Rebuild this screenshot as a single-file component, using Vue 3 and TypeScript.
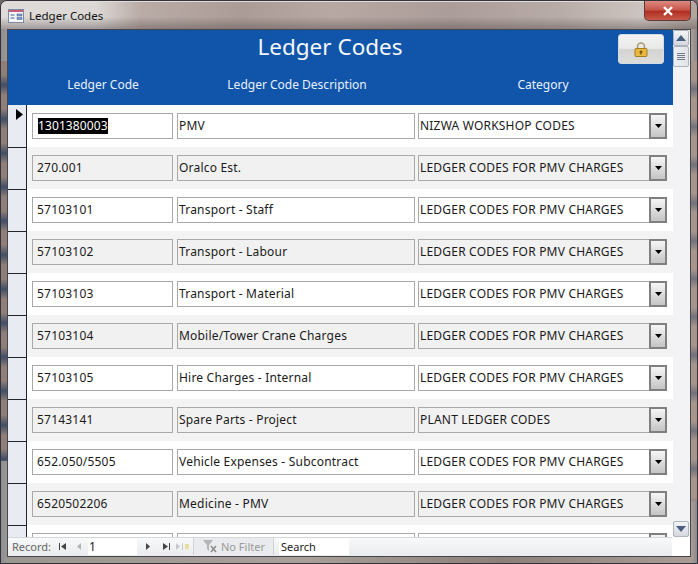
<script setup lang="ts">
interface Row { code: string; desc: string; cat: string }
const pmv = 'LEDGER CODES FOR PMV CHARGES'
const rows: Row[] = [
  { code: '1301380003', desc: 'PMV', cat: 'NIZWA WORKSHOP CODES' },
  { code: '270.001', desc: 'Oralco Est.', cat: pmv },
  { code: '57103101', desc: 'Transport - Staff', cat: pmv },
  { code: '57103102', desc: 'Transport - Labour', cat: pmv },
  { code: '57103103', desc: 'Transport - Material', cat: pmv },
  { code: '57103104', desc: 'Mobile/Tower Crane Charges', cat: pmv },
  { code: '57103105', desc: 'Hire Charges - Internal', cat: pmv },
  { code: '57143141', desc: 'Spare Parts - Project', cat: 'PLANT LEDGER CODES' },
  { code: '652.050/5505', desc: 'Vehicle Expenses - Subcontract', cat: pmv },
  { code: '6520502206', desc: 'Medicine - PMV', cat: pmv },
  { code: '', desc: '', cat: '' }
]
</script>

<template>
  <div class="window">
    <div class="titlebar">
      <svg class="appicon" width="16" height="14" viewBox="0 0 16 14">
        <rect x="0.5" y="0.5" width="15" height="13" fill="#f4f6fa" stroke="#7d8aa0" />
        <rect x="1" y="1" width="14" height="2" fill="#c0607c" />
        <path d="M2.5 6h4M2.5 9h4" stroke="#41608f" />
        <rect x="9" y="5" width="5" height="2" fill="#7f9cc6" stroke="#41608f" stroke-width=".5" />
        <rect x="9" y="8.5" width="5" height="2" fill="#7f9cc6" stroke="#41608f" stroke-width=".5" />
      </svg>
      <span class="wintitle">Ledger Codes</span>
      <button class="close">
        <svg width="12" height="10" viewBox="0 0 12 10"><path d="M2 1l8 8M10 1l-8 8" stroke="#fff" stroke-width="2.4" /></svg>
      </button>
    </div>
    <div class="client">
      <div class="main">
        <div class="form">
          <header class="formhead">
            <div class="titlerow">
              <h1>Ledger Codes</h1>
              <button class="lock">
                <svg width="14" height="15" viewBox="0 0 14 15">
                  <path d="M3.5 7V4.500a3.500 3.500 0 0 1 7 0V7" fill="none" stroke="#a89a70" stroke-width="1.600" />
                  <rect x="1" y="6.500" width="12" height="8" rx="1" fill="#e8b93e" stroke="#a67c1c" />
                  <path d="M7 8.500v4M5.500 10h3" stroke="#5a4210" stroke-width="1.200" />
                </svg>
              </button>
            </div>
            <div class="labels">
              <span class="l1">Ledger Code</span>
              <span class="l2">Ledger Code Description</span>
              <span class="l3">Category</span>
            </div>
          </header>
          <div class="detail">
            <div v-for="(r, i) in rows" :key="i" class="row" :class="{ alt: i % 2 === 1 }">
              <div class="selector">
                <svg v-if="i === 0" class="arrow" width="7" height="11" viewBox="0 0 7 11"><path d="M0 0l7 5.500L0 11z" fill="#000" /></svg>
              </div>
              <div class="field f1"><span :class="{ sel: i === 0 }">{{ r.code }}</span></div>
              <div class="field f2">{{ r.desc }}</div>
              <div class="field f3">
                <span class="catx">{{ r.cat }}</span>
                <span class="drop"><svg width="7" height="4" viewBox="0 0 7 4"><path d="M0 0h7L3.500 4z" fill="#000" /></svg></span>
              </div>
            </div>
          </div>
        </div>
        <aside class="scroll">
          <button class="sbtn">
            <svg width="10" height="6" viewBox="0 0 10 6"><path d="M5 0l5 6H0z" fill="#4a5f7f" /></svg>
          </button>
          <div class="thumb"><i></i><i></i><i></i><i></i></div>
          <div class="track"></div>
          <button class="sbtn">
            <svg width="10" height="6" viewBox="0 0 10 6"><path d="M0 0h10L5 6z" fill="#4a5f7f" /></svg>
          </button>
        </aside>
      </div>
      <footer class="nav">
        <span class="rec">Record:</span>
        <svg class="n first" width="7" height="7" viewBox="0 0 7 7"><path d="M0 0h1v7H0zM7 0v7L2 3.500z" fill="#444" /></svg>
        <svg class="n prev" width="4" height="7" viewBox="0 0 4 7"><path d="M4 0v7L0 3.500z" fill="#b5b5b5" /></svg>
        <span class="recbox">1</span>
        <svg class="n next" width="4" height="7" viewBox="0 0 4 7"><path d="M0 0v7l4-3.500z" fill="#444" /></svg>
        <svg class="n last" width="7" height="7" viewBox="0 0 7 7"><path d="M7 0H6v7h1zM0 0v7l5-3.500z" fill="#444" /></svg>
        <svg class="n new" width="13" height="7" viewBox="0 0 13 7"><path d="M0 0v7l4-3.500z" fill="#c8c8c8" /><rect x="6" y="0" width="1" height="7" fill="#c8c8c8" /><path d="M9 1h4v5H9z" fill="#ecdca0" /></svg>
        <span class="filterbox">
          <svg class="funnel" width="15" height="13" viewBox="0 0 15 13"><path d="M0 0h10L6 5v6L4 9V5z" fill="#b4b4b4" /><path d="M8 6l5 6M13 6l-5 6" stroke="#8a8a8a" stroke-width="1.500" /></svg>
          <span class="nofilter">No Filter</span>
        </span>
        <span class="search">Search</span>
      </footer>
    </div>
  </div>
</template>

<style>
html, body { margin: 0; background: #6f6a68; }
</style>

<style scoped>
.window {
  box-sizing: border-box;
  width: 698px;
  height: 564px;
  display: flex;
  flex-direction: column;
  border: 1px solid #35333a;
  border-radius: 7px 7px 0 0;
  overflow: hidden;
  padding: 0 6px 6px;
  font-family: "Noto Sans", sans-serif;
  background:
    repeating-linear-gradient(#8f7f78 0, #8f7f78 14px, #3f4e68 24px, #8f7f78 34px) 0 60px / 6px 400px no-repeat,
    repeating-linear-gradient(#a8968c 0, #a8968c 18px, #73727a 28px, #a8968c 38px) 100% 60px / 6px 440px no-repeat,
    linear-gradient(90deg, #8d8f96 0, #9c9791 6px, #a8a09a 300px, #8d8079 500px, #a89c94 691px, #8a8a90 100%);
}
.titlebar {
  box-sizing: border-box;
  height: 28px;
  flex: none;
  display: flex;
  align-items: center;
  margin: 0 -6px;
  padding: 0 6px 0 7px;
  position: relative;
  border-top: 1px solid #e2dcda;
  background:
    linear-gradient(rgba(80, 70, 70, 0) 0, rgba(80, 70, 70, 0) 55%, rgba(70, 60, 60, 0.4) 100%),
    linear-gradient(90deg, #dedbd8 0, #dcd8d5 95px, #b9aba6 140px, #ac9c98 240px, #b8a8a4 330px, #ab9d99 450px, #b8aca8 560px, #ccc4c0 640px, #b0a49c 100%);
}
.appicon { flex: none; }
.wintitle { margin-left: 5px; font-size: 11.5px; color: #111; }
.close {
  position: absolute;
  top: -1px;
  right: 6px;
  width: 47px;
  height: 20px;
  padding: 0;
  border: 1px solid #5a3a3a;
  border-top: 0;
  border-radius: 0 0 5px 5px;
  background: linear-gradient(#dc8a80 0, #c9584c 45%, #b03024 55%, #c85a48 100%);
  display: flex;
  align-items: center;
  justify-content: center;
}
.client {
  flex: 1;
  min-height: 0;
  display: flex;
  flex-direction: column;
  border: 1px solid #45474c;
  background: #fff;
}
.main { flex: 1; min-height: 0; display: flex; }
.form { flex: 1; min-width: 0; display: flex; flex-direction: column; }
.formhead { flex: none; height: 75px; background: #1155ab; color: #e8f0fa; display: flex; flex-direction: column; }
.titlerow { height: 41px; position: relative; text-align: center; }
h1 { margin: 0; font-weight: 400; font-size: 22.5px; line-height: 34px; color: #f4f8fc; padding-right: 21px; }
.lock {
  position: absolute;
  top: 4px;
  right: 9px;
  width: 46px;
  height: 30px;
  padding: 0;
  border: 1px solid #d3dbe6;
  border-radius: 3px;
  background: linear-gradient(#f3f3f2 0, #e9e9e8 48%, #d4d4d2 52%, #dcdcda 100%);
  display: flex;
  align-items: center;
  justify-content: center;
}
.labels { position: relative; height: 34px; font-size: 12px; }
.labels span { position: absolute; top: 5px; transform: translateX(-50%); white-space: nowrap; }
.l1 { left: 95px; }
.l2 { left: 289px; }
.l3 { left: 535px; }
.detail { flex: 1; min-height: 0; overflow: hidden; }
.row {
  box-sizing: border-box;
  height: 42px;
  display: flex;
  align-items: flex-start;
  background: #fff;
  position: relative;
}
.row.alt { background: #f3f3f3; }
.selector {
  align-self: stretch;
  box-sizing: border-box;
  flex: none;
  width: 19px;
  margin-right: 5px;
  background: #e8ebf2;
  border-right: 1px solid #20262e;
  position: relative;
}
.row + .row .selector { border-top: 1px solid #20262e; }
.arrow { position: absolute; left: 8px; top: 4px; }
.field {
  box-sizing: border-box;
  height: 26px;
  margin-top: 8px;
  border: 1px solid #a9a9a9;
  font-size: 12px;
  letter-spacing: 0.2px;
  line-height: 24px;
  color: #1a1a1a;
  white-space: nowrap;
  background: #fff;
  padding-left: 1px;
}
.alt .field { background: #f1f1f1; }
.f1 { width: 141px; margin-right: 4px; padding-left: 4px; }
.f2 { width: 238px; margin-right: 3px; }
.f3 { width: 249px; display: flex; align-items: center; position: relative; }
.catx { flex: 1; }
.sel { background: #000; color: #fff; display: inline-block; line-height: 16px; letter-spacing: 0.1px; vertical-align: middle; margin: -1px 0 0 1px; }
.drop {
  box-sizing: border-box;
  width: 18px;
  height: 26px;
  margin-right: -1px;
  flex: none;
  background: linear-gradient(#f6f6f6, #c4c4c4);
  border: 2px solid #808080;
  display: flex;
  align-items: center;
  justify-content: center;
}
.scroll {
  flex: none;
  width: 17px;
  display: flex;
  flex-direction: column;
  background: #f3f3f5;
  box-sizing: border-box;
  padding: 0 1px 0 0;
}
.sbtn {
  flex: none;
  width: 16px;
  height: 16px;
  padding: 0;
  border: 1px solid #aeb4bc;
  border-radius: 2px;
  background: linear-gradient(#f4f5f7, #d4d8de);
  display: flex;
  align-items: center;
  justify-content: center;
}
.thumb {
  flex: none;
  box-sizing: border-box;
  height: 21px;
  border: 1px solid #aeb4bc;
  border-radius: 2px;
  background: linear-gradient(90deg, #eff1f4, #dfe2e7);
  display: flex;
  flex-direction: column;
  justify-content: center;
  gap: 1px;
  align-items: center;
}
.thumb i { display: block; width: 8px; height: 1px; background: #707a88; }
.track { flex: 1; }
.nav {
  flex: none;
  height: 19px;
  display: flex;
  align-items: center;
  background: linear-gradient(#f8f9fa, #e9ebee);
  border-top: 1px solid #d6d8da;
  box-sizing: border-box;
  font-size: 11px;
  color: #666;
  margin-right: 18px;
  padding: 0 0 1px 4px;
}
.rec { width: 47px; flex: none; }
.n { flex: none; }
.prev { margin-left: 11px; }
.recbox {
  box-sizing: border-box;
  width: 49px;
  height: 16px;
  margin-left: 7px;
  background: #fff;
  color: #222;
  font-size: 12px;
  line-height: 16px;
  padding-left: 1px;
}
.next { margin-left: 9px; }
.last { margin-left: 13px; }
.new { margin-left: 6px; }
.filterbox {
  box-sizing: border-box;
  width: 81px;
  height: 17px;
  margin-left: 4px;
  padding-left: 9px;
  display: flex;
  align-items: center;
  border-left: 1px solid #d0d2d5;
  border-right: 1px solid #d0d2d5;
  background: #e9ebee;
}
.funnel { flex: none; }
.nofilter { margin-left: 3px; color: #9a9a9a; white-space: nowrap; }
.search {
  box-sizing: border-box;
  width: 70px;
  height: 16px;
  margin-left: 5px;
  background: #fff;
  color: #222;
  line-height: 16px;
  padding-left: 2px;
}
</style>
